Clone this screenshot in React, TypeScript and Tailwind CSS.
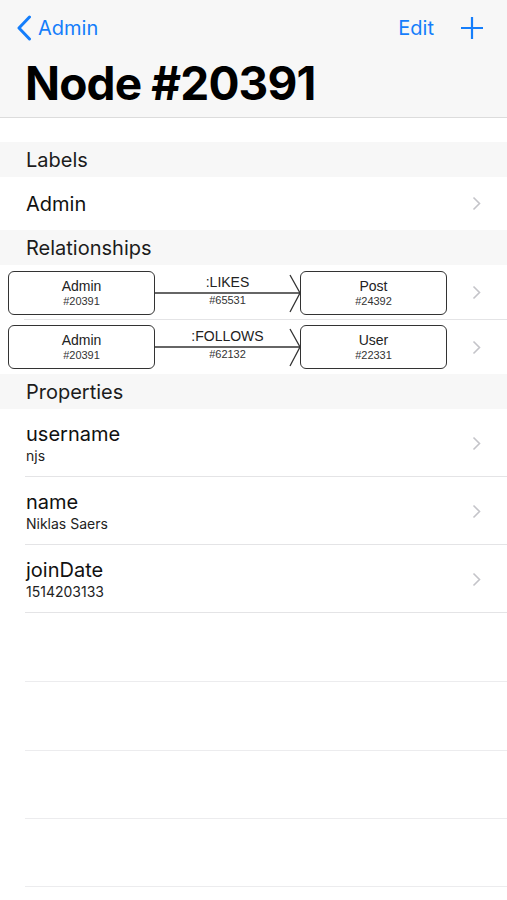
import React from "react";

const BLUE = "text-[#157efb]";

type Rel = { from: string; fromId: string; type: string; relId: string; to: string; toId: string };

const RELS: Rel[] = [
  { from: "Admin", fromId: "#20391", type: ":LIKES", relId: "#65531", to: "Post", toId: "#24392" },
  { from: "Admin", fromId: "#20391", type: ":FOLLOWS", relId: "#62132", to: "User", toId: "#22331" },
];

const PROPS = [
  { key: "username", value: "njs" },
  { key: "name", value: "Niklas Saers" },
  { key: "joinDate", value: "1514203133" },
];

// empty table rows below the properties
const FILLER = ["h-[69px]", "h-[69px]", "h-[68px]", "h-[68px]"];

function Chevron() {
  return (
    <svg width="9" height="15" viewBox="0 0 9 15" className="shrink-0">
      <path d="M1.5 1.5 L7.5 7.5 L1.5 13.5" fill="none" stroke="#c4c4c9" strokeWidth="1.6" />
    </svg>
  );
}

function SectionHeader({ title }: { title: string }) {
  return (
    <div className="flex h-[35px] items-center bg-[#f7f7f7] pl-[26px] text-[20px] text-[#1c1c1c]">
      {title}
    </div>
  );
}

function NodeBox({ name, id }: { name: string; id: string }) {
  return (
    <div className="flex h-[44px] w-[147px] shrink-0 flex-col items-center justify-center rounded-[6px] border-[1.5px] border-[#333] bg-white font-['Liberation_Sans',sans-serif] leading-none">
      <span className="text-[14px] text-[#222]">{name}</span>
      <span className="mt-[3px] text-[11px] text-[#333]">{id}</span>
    </div>
  );
}

function RelRow({ rel, last }: { rel: Rel; last: boolean }) {
  return (
    <div className={`relative flex items-center bg-white pl-[8px] pr-[26px] ${last ? "h-[54px]" : "h-[55px]"}`}>
      <NodeBox name={rel.from} id={rel.fromId} />
      <div className="flex h-[44px] w-[145px] shrink-0 flex-col items-center pt-[3px] font-['Liberation_Sans',sans-serif]">
        <span className="text-[14px] leading-[16px] text-[#222]">{rel.type}</span>
        <svg width="145" height="4" viewBox="0 0 145 4" overflow="visible" className="shrink-0">
          <line x1="0" y1="3" x2="145" y2="3" stroke="#333" strokeWidth="1.3" />
          <path d="M135 -15 L145 3 L135 22" fill="none" stroke="#333" strokeWidth="1.3" />
        </svg>
        <span className="text-[11px] leading-[12px] text-[#333]">{rel.relId}</span>
      </div>
      <NodeBox name={rel.to} id={rel.toId} />
      <div className="flex flex-1 justify-end">
        <Chevron />
      </div>
      {!last && <div className="absolute bottom-0 left-[24px] right-0 h-px bg-[#e4e4e6]" />}
    </div>
  );
}

export default function App() {
  return (
    <div className="min-h-[900px] w-[507px] overflow-hidden bg-white font-['Inter',sans-serif] text-black">
      <div className="border-b border-[#dcdcdc] bg-[#f7f7f7]">
        <div className="flex h-[55px] items-center pl-[16px] pr-[24px]">
          <svg width="16" height="26" viewBox="0 0 16 26" className={BLUE}>
            <path d="M13.5 2 L3 13 L13.5 24" fill="none" stroke="currentColor" strokeWidth="3" strokeLinecap="round" strokeLinejoin="round" />
          </svg>
          <span className={`ml-[6px] text-[20px] ${BLUE}`}>Admin</span>
          <span className={`ml-auto text-[20px] ${BLUE}`}>Edit</span>
          <svg width="22" height="22" viewBox="0 0 22 22" className={`ml-[27px] ${BLUE}`}>
            <path d="M11 0 V22 M0 11 H22" stroke="currentColor" strokeWidth="2.2" />
          </svg>
        </div>
        <div className="flex h-[62px] items-start pl-[25px]">
          <h1 className="text-[46px] font-bold leading-[56px] tracking-[-0.85px]">Node #20391</h1>
        </div>
      </div>

      <div className="h-[24px]" />

      <SectionHeader title="Labels" />
      <div className="flex h-[53px] items-center bg-white pl-[26px] pr-[26px]">
        <span className="flex-1 text-[20px] text-[#111]">Admin</span>
        <Chevron />
      </div>

      <SectionHeader title="Relationships" />
      {RELS.map((r, i) => (
        <RelRow key={r.relId} rel={r} last={i === RELS.length - 1} />
      ))}

      <SectionHeader title="Properties" />
      {PROPS.map((p) => (
        <div key={p.key} className="relative flex h-[68px] items-center bg-white pl-[26px] pr-[26px]">
          <div className="flex flex-1 flex-col">
            <span className="text-[20px] leading-[26px] text-[#111]">{p.key}</span>
            <span className="text-[14px] leading-[18px] text-[#222]">{p.value}</span>
          </div>
          <Chevron />
          <div className="absolute bottom-0 left-[25px] right-0 h-px bg-[#e4e4e6]" />
        </div>
      ))}
      {FILLER.map((h, i) => (
        <div key={i} className={`relative ${h}`}>
          <div className="absolute bottom-0 left-[25px] right-0 h-px bg-[#ececee]" />
        </div>
      ))}
    </div>
  );
}
